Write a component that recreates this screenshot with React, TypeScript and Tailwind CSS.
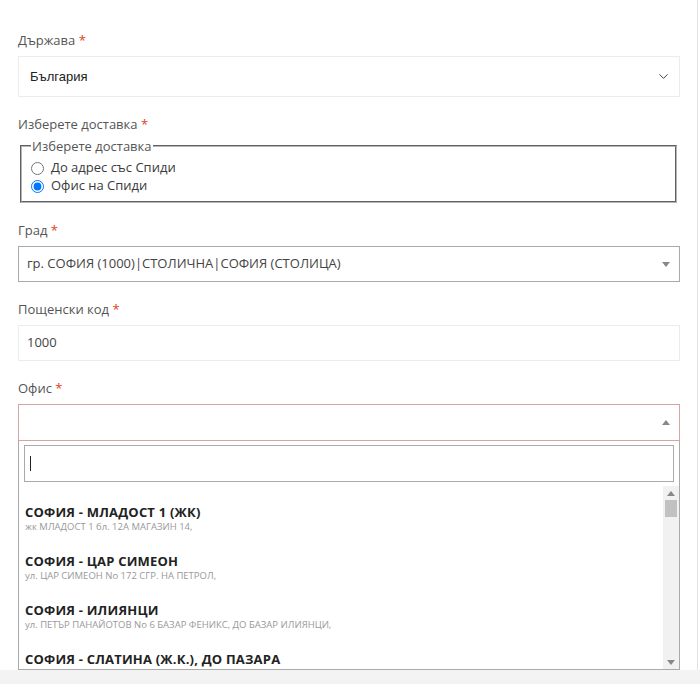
import { ChevronDown } from 'lucide-react';

const offices = [
  { name: 'СОФИЯ - МЛАДОСТ 1 (ЖК)', address: 'жк МЛАДОСТ 1 бл. 12А МАГАЗИН 14,' },
  { name: 'СОФИЯ - ЦАР СИМЕОН', address: 'ул. ЦАР СИМЕОН No 172 СГР. НА ПЕТРОЛ,' },
  { name: 'СОФИЯ - ИЛИЯНЦИ', address: 'ул. ПЕТЪР ПАНАЙОТОВ No 6 БАЗАР ФЕНИКС, ДО БАЗАР ИЛИЯНЦИ,' },
  { name: 'СОФИЯ - СЛАТИНА (Ж.К.), ДО ПАЗАРА', address: '' },
];

function Label({ text }: { text: string }) {
  return (
    <div className="text-[13px] leading-[16px] text-[#555] mb-2">
      {text} <span className="text-[#e2401c]">*</span>
    </div>
  );
}

function Caret({ up }: { up?: boolean }) {
  return (
    <span
      className={
        up
          ? 'w-0 h-0 border-x-[4px] border-x-transparent border-b-[5px] border-b-[#888]'
          : 'w-0 h-0 border-x-[4px] border-x-transparent border-t-[5px] border-t-[#888]'
      }
    />
  );
}

export default function App() {
  return (
    <div
      lang="bg"
      className="w-[700px] h-[700px] bg-white overflow-hidden"
      style={{ fontFamily: '"Open Sans", "Noto Sans", sans-serif' }}
    >
      <div className="w-[698px] h-[670px] border-r border-[#e2e2e2] overflow-hidden pt-[32px] pl-[18px] pr-[17px]">
        {/* Държава */}
        <Label text="Държава" />
        <div className="h-[41px] border border-[#ececec] flex items-center justify-between pl-[11px] pr-[8px]">
          <span className="text-[13px] text-[#222] font-['Liberation_Sans',Arial,sans-serif]">България</span>
          <ChevronDown size={15} strokeWidth={1.5} className="text-[#333]" />
        </div>

        {/* Доставка */}
        <div className="mt-[19px]">
          <Label text="Изберете доставка" />
          <fieldset className="ml-[2px] mr-[3px] border-2 [border-style:groove] border-[#b5b5b5] px-[9px] pt-[5px] pb-[6px] -mt-[2px]">
            <legend className="px-[1px] text-[13px] leading-[16px] text-[#555]">Изберете доставка</legend>
            <label className="flex items-center h-[18px] text-[13px] text-[#3a3a3a]">
              <input type="radio" name="delivery" className="m-0 mr-[7px] w-[13px] h-[13px]" />
              До адрес със Спиди
            </label>
            <label className="flex items-center h-[18px] text-[13px] text-[#3a3a3a]">
              <input type="radio" name="delivery" defaultChecked className="m-0 mr-[7px] w-[13px] h-[13px]" />
              Офис на Спиди
            </label>
          </fieldset>
        </div>

        {/* Град */}
        <div className="mt-[19px]">
          <Label text="Град" />
          <div className="h-[36px] border border-[#aaa] flex items-center justify-between pl-[8px] pr-[9px]">
            <span className="text-[13px] text-[#444]">гр. СОФИЯ (1000)|СТОЛИЧНА|СОФИЯ (СТОЛИЦА)</span>
            <Caret />
          </div>
        </div>

        {/* Пощенски код */}
        <div className="mt-[19px]">
          <Label text="Пощенски код" />
          <div className="h-[36px] border border-[#ececec] flex items-center pl-[8px]">
            <span className="text-[13px] text-[#444]">1000</span>
          </div>
        </div>

        {/* Офис */}
        <div className="mt-[19px]">
          <Label text="Офис" />
          <div className="h-[37px] border border-[#d7a3a3] flex items-center justify-end pr-[9px]">
            <Caret up />
          </div>
          <div className="border border-t-0 border-[#aaa] h-[229px] flex flex-col">
            <div className="px-[5px] pt-[4px] pb-[4px]">
              <div className="h-[37px] border border-[#aaa] flex items-center pl-[5px]">
                <span className="w-px h-[15px] bg-[#222]" />
              </div>
            </div>
            <div className="flex flex-1 min-h-0">
              <div className="flex-1 overflow-hidden pt-[8px]">
                {offices.map((o) => (
                  <div key={o.name} className="pl-[6px] pt-[9px] pb-[10px]">
                    <div className="text-[13px] leading-[18px] font-bold text-[#222] tracking-[0.2px]">{o.name}</div>
                    {o.address && <div className="text-[9.5px] leading-[12px] text-[#999]">{o.address}</div>}
                  </div>
                ))}
              </div>
              <div className="w-[16px] bg-[#f1f1f1] flex flex-col items-center pt-[5px] pb-[4px]">
                <Caret up />
                <div className="mt-[4px] w-[12px] h-[17px] bg-[#c1c1c1]" />
                <div className="flex-1" />
                <Caret />
              </div>
            </div>
          </div>
        </div>
      </div>
      <div className="h-[14px] bg-[#f3f3f3]" />
    </div>
  );
}
